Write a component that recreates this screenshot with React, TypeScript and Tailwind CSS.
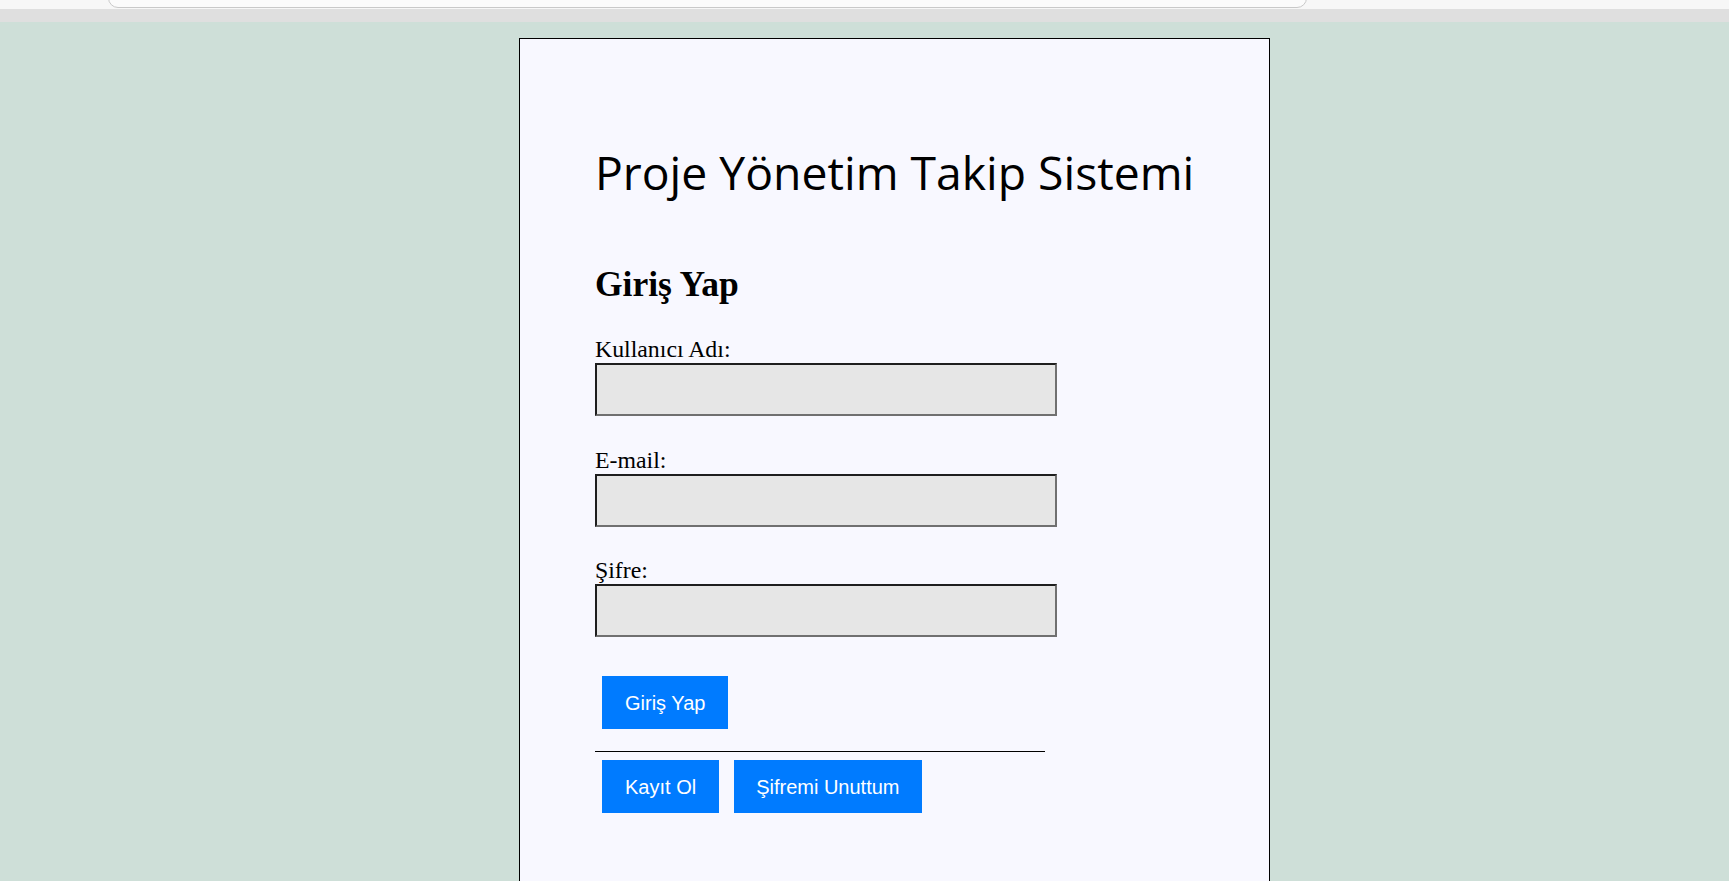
import React from "react";

function Field({ label, type }: { label: string; type: string }) {
  return (
    <div className="flex flex-col">
      <label className="block text-[23.8px] leading-[27px] text-black font-['Liberation_Serif',serif]">{label}</label>
      <input
        type={type}
        className="block w-[462px] h-[53px] bg-[#e6e6e6] border-2 border-solid border-t-[#1e1e1e] border-l-[#1e1e1e] border-b-[#707070] border-r-[#707070] outline-none"
      />
    </div>
  );
}

const btn =
  "h-[53px] bg-[#007bff] text-white text-[20px] font-['Liberation_Sans',Arial,sans-serif]";

export default function App() {
  return (
    <div className="min-h-[881px] bg-[#cedfd8] overflow-hidden">
      <div className="h-[9px] bg-[#f7f7f7] relative">
        <div className="absolute left-[108px] right-[422px] top-[-10px] h-[18px] rounded-b-[10px] border border-[#c9c9c9] bg-[#fbfbfb]" />
      </div>
      <div className="h-[13px] bg-[#dfdfdf]" />
      <div className="ml-[519px] mt-[16px] w-[751px] min-h-[900px] border border-black bg-[#f8f8ff] pl-[75px] pt-[106px] flex flex-col items-start">
        <h1 className="text-[46.3px] leading-[56px] text-black font-['Open_Sans',sans-serif]">
          Proje Yönetim Takip Sistemi
        </h1>
        <h2 className="mt-[63px] text-[35.5px] leading-[40px] font-bold text-black font-['Liberation_Serif',serif]">
          Giriş Yap
        </h2>
        <div className="mt-[32px] flex flex-col gap-[30.5px]">
          <Field label="Kullanıcı Adı:" type="text" />
          <Field label="E-mail:" type="email" />
          <Field label="Şifre:" type="password" />
        </div>
        <button className={`ml-[7px] mt-[39px] px-[23px] ${btn}`}>Giriş Yap</button>
        <div className="mt-[22px] w-[450px] h-px bg-black" />
        <div className="mt-[8px] ml-[7px] flex gap-[15px]">
          <button className={`px-[23px] ${btn}`}>Kayıt Ol</button>
          <button className={`px-[22px] ${btn}`}>Şifremi Unuttum</button>
        </div>
      </div>
    </div>
  );
}
